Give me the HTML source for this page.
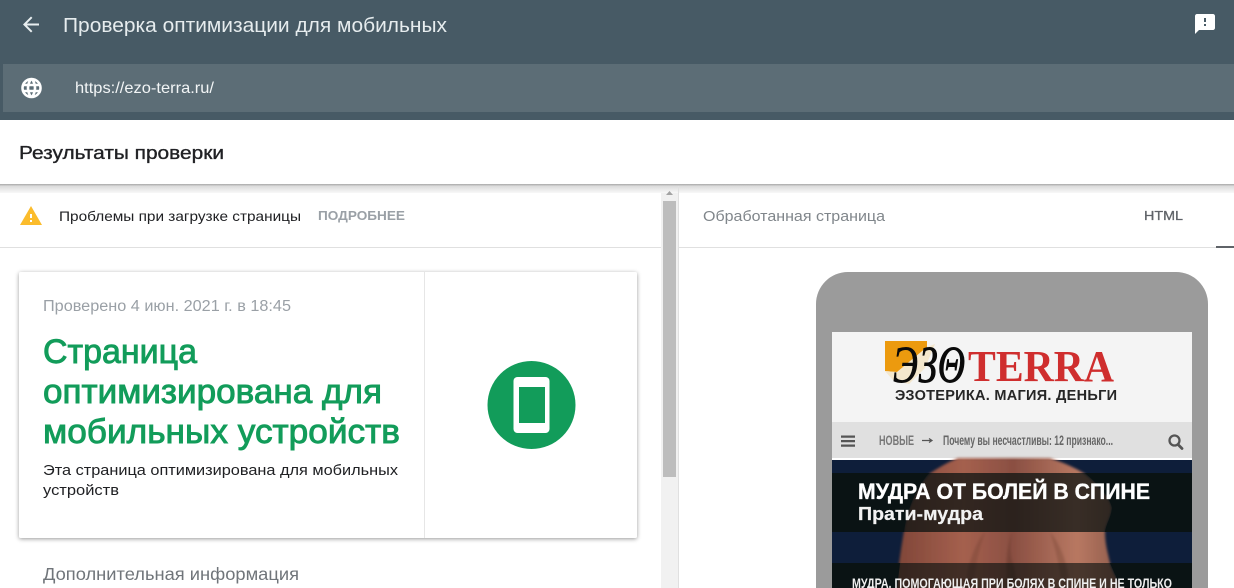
<!DOCTYPE html>
<html lang="ru"><head><meta charset="utf-8"><title>Проверка оптимизации для мобильных</title>
<style>html,body{margin:0;padding:0;background:#fff;width:1234px;height:588px;overflow:hidden}svg{display:block}text{font-family:"Liberation Sans",sans-serif}</style></head>
<body>
<svg width="1234" height="588" viewBox="0 0 1234 588" xmlns="http://www.w3.org/2000/svg">
<defs>
<linearGradient id="sh" x1="0" y1="0" x2="0" y2="1"><stop offset="0" stop-color="#a8a8a8"/><stop offset=".25" stop-color="#dcdcdc"/><stop offset="1" stop-color="#f8f8f8"/></linearGradient>
<linearGradient id="skin" x1="0" y1="0" x2="1" y2="0"><stop offset="0" stop-color="#7f4638"/><stop offset=".3" stop-color="#a5604e"/><stop offset=".52" stop-color="#8a4f42"/><stop offset=".8" stop-color="#b87862"/><stop offset="1" stop-color="#8d5a4a"/></linearGradient>
<filter id="cs" x="-5%" y="-5%" width="110%" height="110%"><feDropShadow dx="0" dy="1" stdDeviation="2" flood-color="#000" flood-opacity=".4"/></filter>
<filter id="bl" x="-5%" y="-5%" width="110%" height="110%"><feGaussianBlur stdDeviation="1.2"/></filter>
</defs>
<rect width="1234" height="120" fill="#475a65"/>
<rect x="3" y="64" width="1231" height="48" fill="#5c6d76"/>
<path transform="translate(19,12.5)" fill="#e8eef0" d="M20 11H7.83l5.59-5.59L12 4l-8 8 8 8 1.41-1.41L7.83 13H20v-2z"/>
<text x="63" y="32" font-size="20" fill="#e6ecee" textLength="384" lengthAdjust="spacingAndGlyphs">Проверка оптимизации для мобильных</text>
<path transform="translate(1193,12)" fill="#fff" d="M20 2H4c-1.1 0-1.99.9-1.99 2L2 22l4-4h14c1.1 0 2-.9 2-2V4c0-1.1-.9-2-2-2zm-7 12h-2v-2h2v2zm0-4h-2V6h2v4z"/>
<path transform="translate(19.5,76)" fill="#fff" stroke="#fff" stroke-width=".6" d="M11.99 2C6.47 2 2 6.48 2 12s4.47 10 9.99 10C17.52 22 22 17.52 22 12S17.52 2 11.99 2zm6.93 6h-2.95c-.32-1.25-.78-2.45-1.38-3.56 1.84.63 3.37 1.91 4.33 3.56zM12 4.04c.83 1.2 1.48 2.53 1.91 3.96h-3.82c.43-1.43 1.08-2.76 1.91-3.96zM4.26 14C4.1 13.36 4 12.69 4 12s.1-1.36.26-2h3.38c-.08.66-.14 1.32-.14 2 0 .68.06 1.34.14 2H4.26zm.82 2h2.95c.32 1.25.78 2.45 1.38 3.56-1.84-.63-3.37-1.9-4.33-3.56zm2.95-8H5.08c.96-1.66 2.49-2.93 4.33-3.56C8.81 5.55 8.35 6.75 8.03 8zM12 19.96c-.83-1.2-1.48-2.53-1.91-3.96h3.82c-.43 1.43-1.08 2.76-1.91 3.96zM14.34 14H9.66c-.09-.66-.16-1.32-.16-2 0-.68.07-1.35.16-2h4.68c.09.65.16 1.32.16 2 0 .68-.07 1.34-.16 2zm.25 5.56c.6-1.11 1.06-2.31 1.38-3.56h2.95c-.96 1.65-2.49 2.93-4.33 3.56zM16.36 14c.08-.66.14-1.32.14-2 0-.68-.06-1.34-.14-2h3.38c.16.64.26 1.31.26 2s-.1 1.36-.26 2h-3.38z"/>
<text x="75" y="93" font-size="16" fill="#f2f5f6" textLength="139" lengthAdjust="spacingAndGlyphs">https://ezo-terra.ru/</text>

<text x="19" y="159" font-size="18.500" fill="#202124" stroke="#202124" stroke-width=".35" textLength="205" lengthAdjust="spacingAndGlyphs">Результаты проверки</text>

<path transform="translate(19,204)" fill="#fbbc2c" d="M1 21h22L12 2 1 21zm12-3h-2v-2h2v2zm0-4h-2v-4h2v4z"/>
<text x="59" y="221" font-size="14" fill="#202124" textLength="242" lengthAdjust="spacingAndGlyphs">Проблемы при загрузке страницы</text>
<text x="318" y="220" font-size="12.500" font-weight="bold" fill="#9aa0a6" textLength="87" lengthAdjust="spacingAndGlyphs">ПОДРОБНЕЕ</text>
<rect y="247" width="661" height="1" fill="#e0e0e0"/>

<rect x="661" y="184" width="17" height="404" fill="#f1f1f1"/>
<rect y="184" width="1234" height="9" fill="url(#sh)"/>
<rect x="663" y="201" width="13" height="276" fill="#bdbdbd"/>
<path d="M669.500 191l3.500 4h-7z" fill="#a3a3a3"/>
<rect x="678" y="186" width="1" height="402" fill="#e0e0e0"/>

<text x="703" y="221" font-size="14.500" fill="#80868b" textLength="182" lengthAdjust="spacingAndGlyphs">Обработанная страница</text>
<text x="1144" y="220" font-size="12.500" fill="#5f6368" stroke="#5f6368" stroke-width=".3" textLength="39" lengthAdjust="spacingAndGlyphs">HTML</text>
<rect x="679" y="247" width="555" height="1" fill="#e0e0e0"/>
<rect x="1216" y="246" width="18" height="2" fill="#5f6368"/>

<rect x="19" y="272" width="618" height="266" rx="2" fill="#fff" filter="url(#cs)"/>
<rect x="424" y="272" width="1" height="266" fill="#e6e6e6"/>
<text x="43" y="311" font-size="15.500" fill="#9aa0a6" textLength="248" lengthAdjust="spacingAndGlyphs">Проверено 4 июн. 2021 г. в 18:45</text>
<g font-size="34.500" fill="#129c5a" stroke="#129c5a" stroke-width=".9">
<text x="43" y="363" textLength="154" lengthAdjust="spacingAndGlyphs">Страница</text>
<text x="43" y="403" textLength="339" lengthAdjust="spacingAndGlyphs">оптимизирована для</text>
<text x="43" y="443" textLength="357" lengthAdjust="spacingAndGlyphs">мобильных устройств</text>
</g>
<text x="43" y="475" font-size="15" fill="#202124" textLength="355" lengthAdjust="spacingAndGlyphs">Эта страница оптимизирована для мобильных</text>
<text x="43" y="495" font-size="15" fill="#202124" textLength="76" lengthAdjust="spacingAndGlyphs">устройств</text>
<circle cx="531.500" cy="405" r="44" fill="#129c5a"/>
<rect x="513.500" y="377" width="36" height="56" rx="4" fill="#fff"/>
<rect x="519" y="387" width="26" height="36" fill="#129c5a"/>
<text x="43" y="580" font-size="17.500" fill="#70757a" textLength="256" lengthAdjust="spacingAndGlyphs">Дополнительная информация</text>

<path d="M816 588V304a32 32 0 0 1 32-32h328a32 32 0 0 1 32 32v284z" fill="#9b9b9b"/>
<rect x="832" y="332" width="360" height="256" fill="#f4f4f4"/>

<g style="filter:blur(.35px)">
<path d="M885 341h42v6l-30 25-12-1z" fill="#ec9a0e"/>
<path d="M885 371l12 1 30-25 8-3-10 24-16 16-16-4z" fill="#f3d9a6" opacity=".5"/>
<text x="893" y="382" font-style="italic" font-size="52" fill="#0a0a0a" stroke="#0a0a0a" stroke-width=".9" textLength="72" lengthAdjust="spacingAndGlyphs" style="font-family:'Liberation Serif',serif">ЭЗΘ</text>
<text x="968" y="381" font-size="44" font-weight="bold" fill="#cf2e2e" textLength="146" lengthAdjust="spacingAndGlyphs" style="font-family:'Liberation Serif',serif">TERRA</text>
<text x="895" y="400" font-size="14.500" font-weight="bold" fill="#262626" textLength="222" lengthAdjust="spacing">ЭЗОТЕРИКА. МАГИЯ. ДЕНЬГИ</text>

<rect x="832" y="422" width="360" height="36" fill="#e0e0e0"/>
<rect x="832" y="458" width="360" height="2" fill="#fff"/>
<path d="M841 435.500h14v2.200h-14zM841 440h14v2.200h-14zM841 444.500h14v2.200h-14z" fill="#555"/>
<text x="879" y="445" font-size="14" font-weight="bold" fill="#777" textLength="35" lengthAdjust="spacingAndGlyphs">НОВЫЕ</text>
<path d="M922 440.500h9.500m-2.500-2l3 2-3 2" stroke="#555" stroke-width="1.200" fill="none"/>
<text x="943" y="445" font-size="14" font-weight="bold" fill="#666" textLength="170" lengthAdjust="spacingAndGlyphs">Почему вы несчастливы: 12 признако...</text>
<circle cx="1174.500" cy="440.500" r="5" fill="none" stroke="#555" stroke-width="2.300"/>
<path d="M1178 444.500l4 4" stroke="#555" stroke-width="2.800" stroke-linecap="round"/>

<rect x="832" y="460" width="360" height="128" fill="#0e1e3a"/>
<g filter="url(#bl)">
<path d="M958 458H1050C1064 463 1076 468 1085 474C1098 484 1110 497 1112 508C1111 518 1106 524 1105 532C1105 544 1108 554 1110 563C1113 572 1118 580 1122 590H896C898 570 901 548 904 531C906 515 914 490 929 474C938 468 948 462 958 458Z" fill="url(#skin)"/>
<path d="M1012 532c-2 12-2 22 1 32 2 8 4 16 5 24h-12c0-16 0-40 6-56z" fill="#6a3a30" opacity=".55"/>
<path d="M985 532c-6 16-10 36-12 56h-8c2-20 8-42 20-56zM1050 532c6 18 10 38 12 56h8c-2-22-8-42-20-56z" fill="#6a3a30" opacity=".3"/>
</g>
<rect x="832" y="473" width="360" height="59" fill="#07100f" fill-opacity=".72"/>
<path d="M832 473H929C914 490 906 515 904 532H832ZM1085 473H1192V532H1105C1106 524 1111 518 1112 508C1110 497 1098 484 1085 473Z" fill="#0a1314"/>
<rect x="832" y="563" width="360" height="25" fill="#07100f" fill-opacity=".62"/>
<path d="M832 563H900L897 588H832ZM1110 563H1192V588H1121Z" fill="#0a1314"/>
<text x="858" y="499" font-size="22" font-weight="bold" fill="#fff" stroke="#fff" stroke-width=".35" textLength="292" lengthAdjust="spacingAndGlyphs">МУДРА ОТ БОЛЕЙ В СПИНЕ</text>
<text x="858" y="520" font-size="18" font-weight="bold" fill="#f2f2f2" stroke="#f2f2f2" stroke-width=".2" textLength="125" lengthAdjust="spacingAndGlyphs">Прати-мудра</text>
<text x="852" y="588" font-size="14" font-weight="bold" fill="#f0f0f0" textLength="320" lengthAdjust="spacingAndGlyphs">МУДРА, ПОМОГАЮЩАЯ ПРИ БОЛЯХ В СПИНЕ И НЕ ТОЛЬКО</text>
</g>
</svg>
</body></html>
